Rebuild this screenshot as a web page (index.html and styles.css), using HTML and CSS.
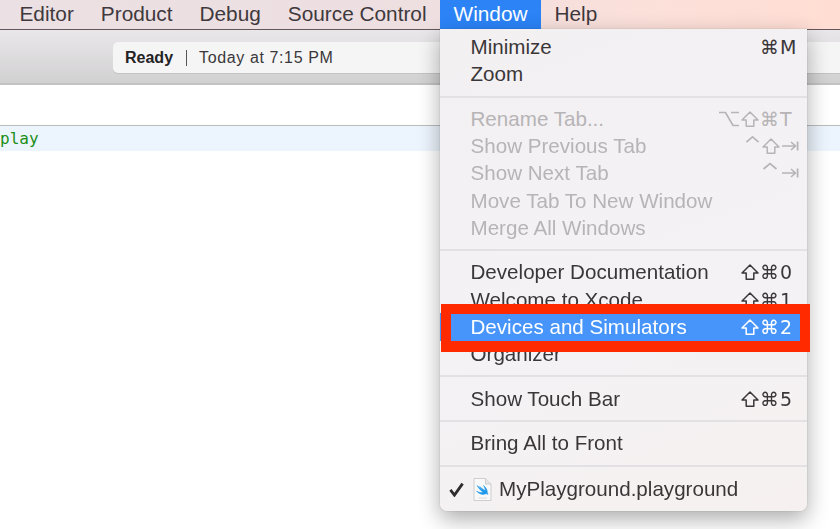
FILE: index.html
```html
<!DOCTYPE html>
<html lang="en">
<head>
<meta charset="utf-8">
<title>Xcode Window menu</title>
<link rel="stylesheet" href="styles.css">
</head>
<body>
<svg class="defs" aria-hidden="true">
  <symbol id="k-shift" viewBox="0 0 18 16"><path d="M9 1 L17 9 H12.8 V15.2 H5.2 V9 H1 Z" fill="none" stroke="currentColor" stroke-width="1.5" stroke-linejoin="round"/></symbol>
  <symbol id="k-opt" viewBox="0 0 20 16"><path d="M0 1.5 H6.5 L14 14.5 H20 M12 1.5 H20" fill="none" stroke="currentColor" stroke-width="1.7"/></symbol>
  <symbol id="k-ctrl" viewBox="0 0 16 16"><path d="M1.5 7 L8 1.5 L14.5 7" fill="none" stroke="currentColor" stroke-width="1.7"/></symbol>
  <symbol id="k-tab" viewBox="0 0 17 16"><path d="M0 8 H13 M9 4 L13.5 8 L9 12" fill="none" stroke="currentColor" stroke-width="1.6"/><path d="M15.6 3.5 V12.5" stroke="currentColor" stroke-width="1.8"/></symbol>
</svg>
<header class="menubar">
  <span class="menubar-item">Editor</span>
  <span class="menubar-item">Product</span>
  <span class="menubar-item">Debug</span>
  <span class="menubar-item">Source Control</span>
  <span class="menubar-item is-open">Window</span>
  <span class="menubar-item">Help</span>
</header>
<section class="toolbar">
  <div class="status">
    <strong class="status-state">Ready</strong>
    <span class="status-time">Today at 7:15 PM</span>
  </div>
</section>
<main class="editor">
  <div class="editor-gap"></div>
  <div class="code-line">play</div>
</main>
<nav class="menu">
  <div class="row"><span>Minimize</span><span class="keys"><i>⌘</i><i>M</i></span></div>
  <div class="row"><span>Zoom</span></div>
  <hr class="sep">
  <div class="row is-off"><span>Rename Tab...</span><span class="keys"><i><svg class="k k-wide"><use href="#k-opt"/></svg></i><i><svg class="k"><use href="#k-shift"/></svg></i><i>⌘</i><i>T</i></span></div>
  <div class="row is-off"><span>Show Previous Tab</span><span class="keys"><i><svg class="k k-up"><use href="#k-ctrl"/></svg></i><i><svg class="k k-in"><use href="#k-shift"/></svg></i><i><svg class="k k-tab"><use href="#k-tab"/></svg></i></span></div>
  <div class="row is-off"><span>Show Next Tab</span><span class="keys"><i><svg class="k k-up k-in"><use href="#k-ctrl"/></svg></i><i><svg class="k k-tab"><use href="#k-tab"/></svg></i></span></div>
  <div class="row is-off"><span>Move Tab To New Window</span></div>
  <div class="row is-off"><span>Merge All Windows</span></div>
  <hr class="sep">
  <div class="row"><span>Developer Documentation</span><span class="keys"><i><svg class="k"><use href="#k-shift"/></svg></i><i>⌘</i><i>0</i></span></div>
  <div class="row"><span>Welcome to Xcode</span><span class="keys"><i><svg class="k"><use href="#k-shift"/></svg></i><i>⌘</i><i>1</i></span></div>
  <div class="row is-active"><span>Devices and Simulators</span><span class="keys"><i><svg class="k"><use href="#k-shift"/></svg></i><i>⌘</i><i>2</i></span><div class="callout"></div></div>
  <div class="row"><span>Organizer</span></div>
  <hr class="sep">
  <div class="row"><span>Show Touch Bar</span><span class="keys"><i><svg class="k"><use href="#k-shift"/></svg></i><i>⌘</i><i>5</i></span></div>
  <hr class="sep">
  <div class="row"><span>Bring All to Front</span></div>
  <hr class="sep">
  <div class="row row-doc">
    <svg class="check" viewBox="0 0 16 16" aria-hidden="true"><path d="M1.5 8.5 L5.8 14 L14.5 1.8" fill="none" stroke="#2f2c2e" stroke-width="3"/></svg>
    <svg class="doc" viewBox="0 0 19 23" aria-hidden="true">
      <path d="M1 .5H12.5L18 6V22.5H1Z" fill="#f9f9f9" stroke="#cfcdcd"/>
      <path d="M12.5 .5V6H18" fill="#e6e6e6" stroke="#cfcdcd"/>
      <path d="M4 7.5C7 10 9 11.5 10.5 12.5L6.5 8.5C9 10.5 11 12 12.5 12.5C12 10.5 11.5 9 10.5 7.5C13 9.5 14.5 12 14.3 14.5C14.8 15.3 15 16 14.8 16.5C14 15.6 13 15.6 12 16C9.5 17 6 16 3.5 13C6 14.5 8.5 15 10 14.3C8 13 6 10.5 4 7.5Z" fill="#1c97ea" stroke="#1c97ea" stroke-width=".5"/>
      <path d="M5 20H14" stroke="#dcdcdc"/>
    </svg>
    <span>MyPlayground.playground</span>
  </div>
</nav>
</body>
</html>
```
FILE: styles.css
```css
* { box-sizing: border-box; }
html, body { margin: 0; height: 100%; }
body {
  position: relative;
  width: 840px;
  height: 529px;
  overflow: hidden;
  background: #fff;
  font-family: "Liberation Sans", Arial, sans-serif;
  color: #3b3739;
  filter: blur(.3px);
}
.defs { display: none; }
.menubar {
  display: flex;
  height: 30px;
  padding-left: 6px;
  background: linear-gradient(90deg, #ebe0e3 0%, #eedfe1 50%, #fbe0da 75%, #ffddd3 100%);
  border-bottom: 1px solid #64555a;
  font-size: 20.8px;
  line-height: 27px;
}
.menubar-item { padding: 0 13.5px; color: #3f383c; }
.menubar-item.is-open { background: #2b83f6; color: #fff; }
.toolbar {
  height: 55px;
  padding-top: 12px;
  padding-left: 113px;
  background: linear-gradient(#e9e7e9, #d2d1d2);
  border-bottom: 2px solid #c4c3c4;
}
.status {
  display: flex;
  align-items: center;
  height: 31px;
  padding-left: 12px;
  background: #f6f5f6;
  border-radius: 5px 0 0 5px;
  box-shadow: 0 1px 0 #c4c3c4;
  font-size: 16px;
}
.status-state {
  padding-right: 13px;
  border-right: 1px solid #555;
  line-height: 16px;
  color: #242224;
}
.status-time { padding-left: 12px; color: #3a383a; letter-spacing: .62px; }
.editor { background: #fff; }
.editor-gap { height: 41px; border-bottom: 1px solid #bcbcbc; }
.code-line {
  height: 25px;
  background: #ecf4fd;
  font: 16px/26px "DejaVu Sans Mono", monospace;
  color: #1c8f16;
}
.menu {
  position: absolute;
  left: 440px;
  top: 29px;
  width: 367px;
  height: 482px;
  padding-top: 4.5px;
  background: linear-gradient(160deg, #f3f0f2, #f4f2f5 55%, #f6f1f0);
  border-radius: 0 0 7px 7px;
  box-shadow: 0 0 1px rgba(0, 0, 0, .45), 0 8px 22px rgba(0, 0, 0, .33);
  font-size: 20.6px;
}
.row {
  position: relative;
  display: flex;
  align-items: center;
  justify-content: space-between;
  height: 27.2px;
  padding: 0 7px 0 30.5px;
  white-space: nowrap;
}
.row.is-off { color: #b6b4b6; }
.row.is-active { z-index: 1; background: #4795fb; box-shadow: 0 1px 0 #4795fb; color: #fff; }
.keys { display: flex; }
.keys i {
  display: flex;
  align-items: center;
  width: 20px;
  font-family: "DejaVu Sans", sans-serif;
  font-style: normal;
  font-size: 19px;
}
.k { width: 18px; height: 16px; margin-left: 1px; }
.k-wide { width: 20px; margin-left: -1px; }
.k-up { width: 16px; margin-top: -6px; margin-left: 5px; }
.k-in { margin-left: 2px; }
.k-tab { width: 17px; margin-left: 2px; }
.callout {
  position: absolute;
  inset: -9.4px -3px -11.2px 1px;
  border: solid #ff2a00;
  border-width: 10px 10px 11px;
}
.sep {
  height: 2px;
  margin: 7.75px 0;
  border: 0;
  background: #e3e1e3;
}
.row-doc { justify-content: flex-start; padding-left: 9px; height: 30px; }
.check { width: 15px; height: 15px; margin-right: 9px; }
.doc { width: 19px; height: 23px; margin-right: 7px; }
```
